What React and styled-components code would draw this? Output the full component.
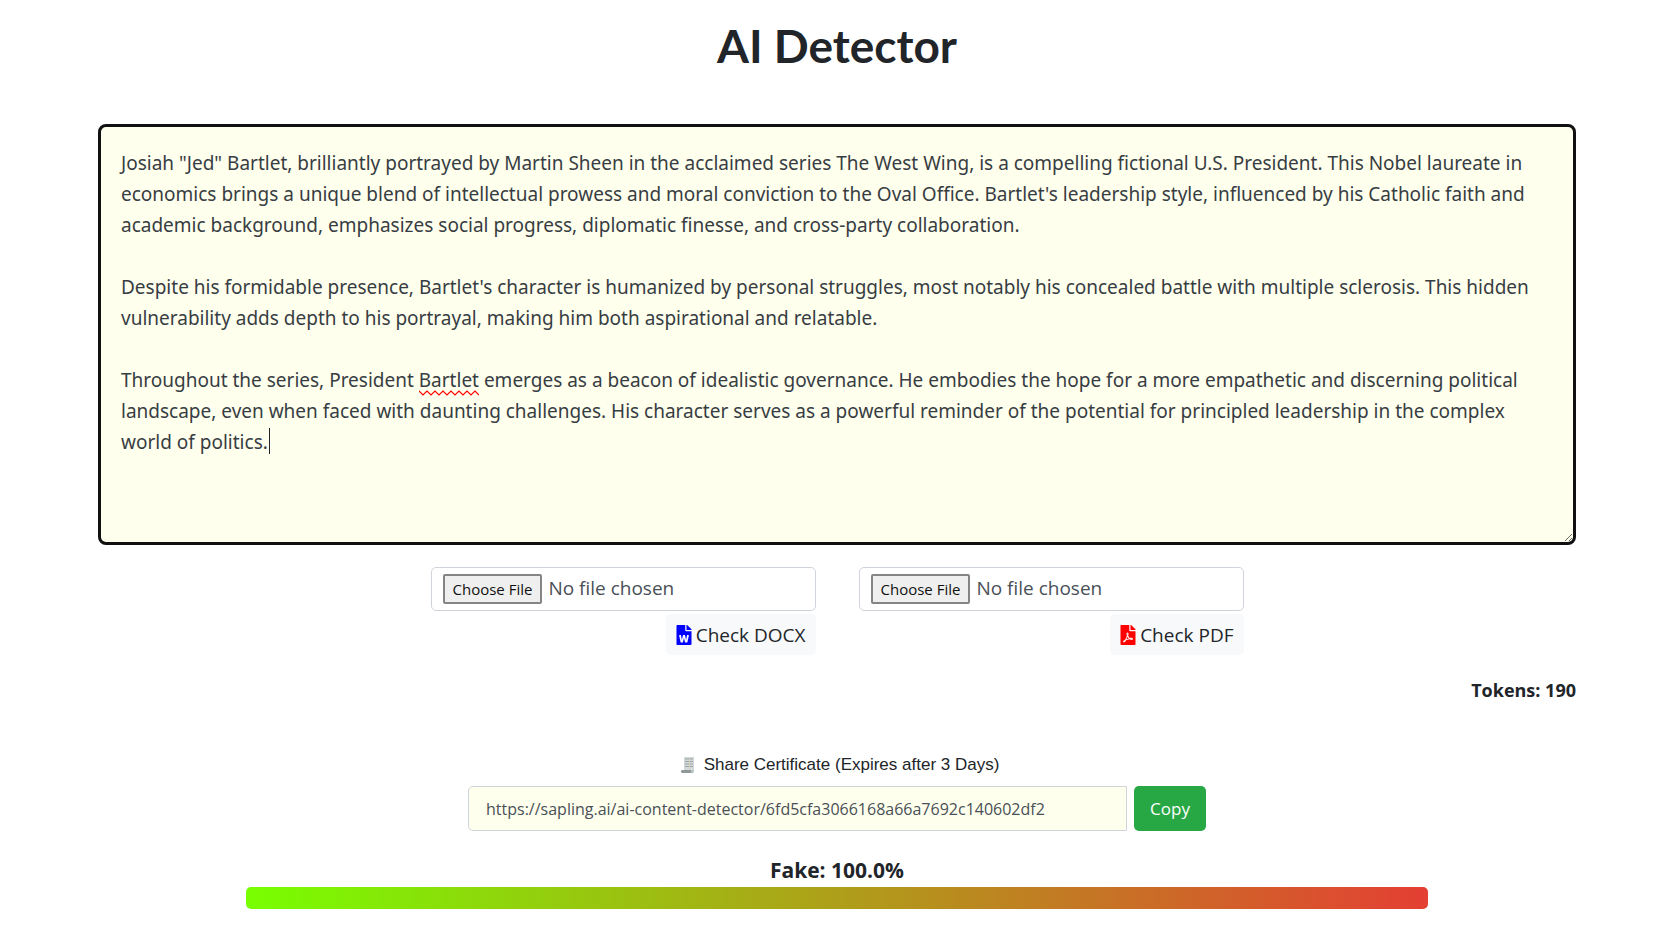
import React, { useState } from "react";
import styled, { createGlobalStyle } from "styled-components";
import { FaFileWord, FaFilePdf } from "react-icons/fa";

const GlobalStyle = createGlobalStyle`
  *, *::before, *::after { box-sizing: border-box; }
  body {
    margin: 0;
    background: #fff;
    color: #212529;
    font-family: "Open Sans", "Noto Sans", sans-serif;
    font-size: 20px;
    line-height: 30px;
  }
  button, input, textarea { font-family: inherit; }
`;

const Page = styled.main`
  display: flex;
  flex-direction: column;
  align-items: center;
  padding: 16px 98px;
`;

const Title = styled.h1`
  margin: 0 0 48px;
  font-family: Lato, sans-serif;
  font-size: 46px;
  line-height: 60px;
  font-weight: 700;
`;

const Editor = styled.div`
  position: relative;
  display: flex;
  width: 100%;
`;

const TextArea = styled.textarea`
  flex: 1;
  height: 421px;
  padding: 21px 24px 20px 20px;
  border: 3px solid #111;
  border-radius: 8px;
  outline: 0;
  background: #ffffed;
  color: #373d43;
  font-family: "Noto Sans", "Open Sans", sans-serif;
  font-size: 19px;
  line-height: 31px;
  resize: vertical;
`;

const Squiggle = styled.svg`
  position: absolute;
  left: 321px;
  top: 266px;
  width: 60px;
  height: 6px;
  pointer-events: none;
`;

const Caret = styled.span`
  position: absolute;
  left: 171px;
  top: 304px;
  width: 1px;
  height: 26px;
  background: #212529;
  pointer-events: none;
`;

const Uploads = styled.section`
  display: flex;
  justify-content: center;
  gap: 43px;
  width: 100%;
  margin-top: 22px;
`;

const Upload = styled.form`
  display: flex;
  flex-direction: column;
  align-items: flex-end;
  gap: 3px;
  width: 385px;
`;

const FileInput = styled.input`
  width: 100%;
  height: 44px;
  padding: 5px 11px;
  border: 1px solid #ced4da;
  border-radius: 5px;
  color: #495057;
  font-size: 19px;
  line-height: 30px;

  &::file-selector-button {
    height: 30px;
    margin: 0 6px 0 0;
    padding: 0 8px;
    border: 2px solid #858585;
    border-radius: 2px;
    background: #efefef;
    color: #111;
    font-family: inherit;
    font-size: 15px;
  }
`;

const CheckButton = styled.button`
  display: flex;
  align-items: center;
  gap: 4px;
  height: 41px;
  padding: 0 10px;
  border: 0;
  border-radius: 5px;
  background: #f8f9fa;
  color: #212529;
  font-size: 19px;

  svg {
    color: ${(p) => p.$tint};
    width: 16px;
    height: 20px;
  }
`;

const Tokens = styled.p`
  align-self: flex-end;
  margin: 20px 0 0;
  font-size: 18px;
  font-weight: 700;
`;

const Share = styled.section`
  display: flex;
  flex-direction: column;
  gap: 6px;
  width: 50%;
  max-width: 738px;
  margin-top: 45px;
`;

const ShareLabel = styled.label`
  display: flex;
  align-items: center;
  justify-content: center;
  gap: 9px;
  font-family: "Liberation Sans", Arial, sans-serif;
  font-size: 17px;
`;

const ShareRow = styled.div`
  display: flex;
  gap: 7px;
`;

const ShareInput = styled.input`
  flex: 1;
  min-width: 0;
  height: 45px;
  padding: 0 17px;
  border: 1px solid #ced4da;
  border-radius: 5px 0 0 5px;
  background: #ffffed;
  color: #495057;
  font-size: 16px;
`;

const CopyButton = styled.button`
  height: 45px;
  width: 72px;
  padding: 0;
  border: 0;
  border-radius: 5px;
  background: #28a745;
  color: #fff;
  font-size: 17px;
`;

const Score = styled.p`
  margin: 24px 0 2px;
  font-size: 21px;
  font-weight: 700;
`;

const ScoreBar = styled.div`
  width: 80%;
  height: 22px;
  border-radius: 5px;
  background: linear-gradient(to right, #78ff00, #e43f33);
`;

const SAMPLE = `Josiah "Jed" Bartlet, brilliantly portrayed by Martin Sheen in the acclaimed series The West Wing, is a compelling fictional U.S. President. This Nobel laureate in economics brings a unique blend of intellectual prowess and moral conviction to the Oval Office. Bartlet's leadership style, influenced by his Catholic faith and academic background, emphasizes social progress, diplomatic finesse, and cross-party collaboration.

Despite his formidable presence, Bartlet's character is humanized by personal struggles, most notably his concealed battle with multiple sclerosis. This hidden vulnerability adds depth to his portrayal, making him both aspirational and relatable.

Throughout the series, President Bartlet emerges as a beacon of idealistic governance. He embodies the hope for a more empathetic and discerning political landscape, even when faced with daunting challenges. His character serves as a powerful reminder of the potential for principled leadership in the complex world of politics.`;

function ScrollIcon() {
  return (
    <svg width="20" height="18" viewBox="-6 0 20 18" aria-hidden="true">
      <path d="M3 1h10v14H3z" fill="#d3d8da" />
      <path d="M4 3h8M4 5.500h8M4 8h8M4 10.500h8" stroke="#9aa9a8" strokeWidth="1" />
      <path d="M8.500 3v10" stroke="#d8cfb8" strokeWidth="1" />
      <path d="M1 14h9v3H2a1.500 1.500 0 0 1-1-3z" fill="#929898" />
      <path d="M10 14h3v1a2 2 0 0 1-3 2z" fill="#bcc3c5" />
    </svg>
  );
}

export default function App() {
  const [text, setText] = useState(SAMPLE);
  const url = "https://sapling.ai/ai-content-detector/6fd5cfa3066168a66a7692c140602df2";
  return (
    <>
      <GlobalStyle />
      <Page>
        <Title>AI Detector</Title>
        <Editor>
          <TextArea
            aria-label="Text to check"
            spellCheck={false}
            value={text}
            onChange={(e) => setText(e.target.value)}
          />
          <Squiggle viewBox="0 0 60 6" aria-hidden="true">
            <path
              d="M0 1l4 4 4-4 4 4 4-4 4 4 4-4 4 4 4-4 4 4 4-4 4 4 4-4 4 4 4-4 4 4"
              fill="none"
              stroke="#f00"
              strokeWidth="1.200"
            />
          </Squiggle>
          <Caret aria-hidden="true" />
        </Editor>
        <Uploads>
          <Upload onSubmit={(e) => e.preventDefault()}>
            <FileInput type="file" accept=".docx" aria-label="DOCX file" />
            <CheckButton $tint="#00f">
              <FaFileWord aria-hidden="true" />
              Check DOCX
            </CheckButton>
          </Upload>
          <Upload onSubmit={(e) => e.preventDefault()}>
            <FileInput type="file" accept=".pdf" aria-label="PDF file" />
            <CheckButton $tint="#f00">
              <FaFilePdf aria-hidden="true" />
              Check PDF
            </CheckButton>
          </Upload>
        </Uploads>
        <Tokens>Tokens: 190</Tokens>
        <Share>
          <ShareLabel htmlFor="share-url">
            <ScrollIcon />
            Share Certificate (Expires after 3 Days)
          </ShareLabel>
          <ShareRow>
            <ShareInput id="share-url" type="text" readOnly value={url} />
            <CopyButton type="button" onClick={() => navigator.clipboard?.writeText(url)}>
              Copy
            </CopyButton>
          </ShareRow>
        </Share>
        <Score>Fake: 100.0%</Score>
        <ScoreBar role="meter" aria-label="Fake" aria-valuemin={0} aria-valuemax={100} aria-valuenow={100} />
      </Page>
    </>
  );
}
